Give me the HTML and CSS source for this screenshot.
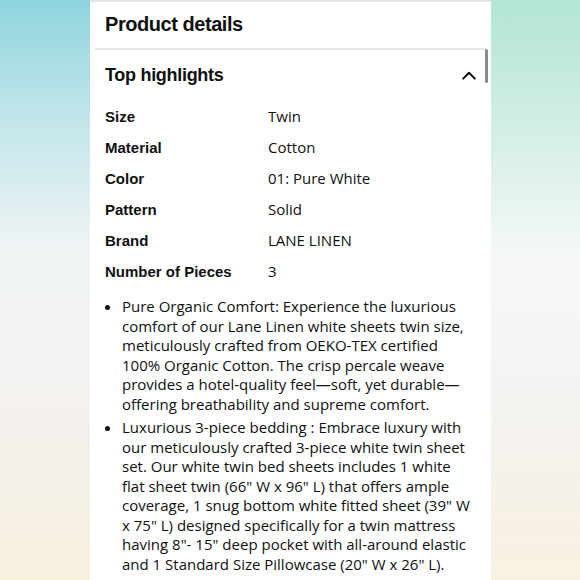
FILE: index.html
```html
<!DOCTYPE html>
<html lang="en">
<head>
<meta charset="utf-8">
<title>Product details</title>
<link rel="stylesheet" href="styles.css">
</head>
<body>
<div class="page">
  <div class="side side-left"></div>
  <main class="panel">
    <h1 class="panel-title">Product details</h1>
    <div class="divider-wrap">
      <div class="divider"></div>
      <div class="scrollbar"></div>
    </div>
    <section class="section">
      <div class="section-head">
        <h2 class="section-title">Top highlights</h2>
        <svg class="chevron" width="14" height="9" viewBox="0 0 14 9" aria-hidden="true">
          <path d="M1.2 7.6 L7 1.8 L12.8 7.6" fill="none" stroke="#0f1111" stroke-width="2" stroke-linecap="round" stroke-linejoin="round"/>
        </svg>
      </div>
      <table class="specs">
        <tr><th>Size</th><td>Twin</td></tr>
        <tr><th>Material</th><td>Cotton</td></tr>
        <tr><th>Color</th><td>01: Pure White</td></tr>
        <tr><th>Pattern</th><td>Solid</td></tr>
        <tr><th>Brand</th><td>LANE LINEN</td></tr>
        <tr><th>Number of Pieces</th><td>3</td></tr>
      </table>
      <ul class="bullets">
        <li>Pure Organic Comfort: Experience the luxurious comfort of our Lane Linen white sheets twin size, meticulously crafted from OEKO-TEX certified 100% Organic Cotton. The crisp percale weave provides a hotel-quality feel—soft, yet durable—offering breathability and supreme comfort.</li>
        <li>Luxurious 3-piece bedding : Embrace luxury with our meticulously crafted 3-piece white twin sheet set. Our white twin bed sheets includes 1 white flat sheet twin (66" W x 96" L) that offers ample coverage, 1 snug bottom white fitted sheet (39" W x 75" L) designed specifically for a twin mattress having 8"- 15" deep pocket with all-around elastic and 1 Standard Size Pillowcase (20" W x 26" L).</li>
      </ul>
    </section>
  </main>
  <div class="side side-right"></div>
</div>
</body>
</html>
```

FILE: styles.css
```css
* { box-sizing: border-box; }

html, body {
  margin: 0;
  padding: 0;
  width: 580px;
  height: 580px;
  overflow: hidden;
}

body {
  font-family: "Open Sans", "Noto Sans", sans-serif;
  color: #0f1111;
  background: #ffffff;
}

.page {
  display: flex;
  width: 580px;
  height: 580px;
}

.side {
  flex: none;
  height: 100%;
}

.side-left {
  width: 90px;
  background: linear-gradient(180deg, #8fd4de 0%, #c0e5ea 20%, #eef3f4 42%, #f4f3f3 60%, #f3efe8 80%, #f8f0dd 100%);
}

.side-right {
  width: 89px;
  background: linear-gradient(180deg, #b2e5d6 0%, #d3eee5 22%, #f6f8f7 45%, #f4f4f4 62%, #f5f1ea 82%, #f9f1e0 100%);
}

.panel {
  flex: none;
  width: 401px;
  height: 100%;
  background: #ffffff;
  border-top: 2px solid #e3e5e5;
  overflow: hidden;
}

.panel-title {
  margin: 0;
  padding: 0 15px;
  height: 46px;
  line-height: 44px;
  font-family: "Liberation Sans", Arial, sans-serif;
  font-size: 20px;
  font-weight: 700;
  letter-spacing: -0.45px;
}

.divider-wrap {
  position: relative;
  padding: 0 5px;
}

.divider {
  height: 2px;
  background: #e7e7e7;
}

.scrollbar {
  position: absolute;
  right: 3px;
  top: 1px;
  width: 3px;
  height: 34px;
  border-radius: 2px;
  background: #8a8a8a;
}

.section {
  padding: 0 15px;
}

.section-head {
  display: flex;
  align-items: center;
  justify-content: space-between;
  height: 51px;
}

.section-title {
  margin: 0;
  font-family: "Liberation Sans", Arial, sans-serif;
  font-size: 18px;
  font-weight: 700;
  letter-spacing: -0.3px;
}

.chevron {
  display: block;
  margin-right: 0;
}

.specs {
  border-collapse: collapse;
  font-size: 15px;
}

.specs th,
.specs td {
  padding: 0;
  height: 31px;
  line-height: 31px;
  text-align: left;
  vertical-align: middle;
}

.specs th {
  width: 163px;
  font-family: "Liberation Sans", Arial, sans-serif;
  font-weight: 700;
}

.specs td {
  font-weight: 400;
}

.bullets {
  margin: 10px 0 0;
  padding: 0 0 0 17px;
  font-size: 15px;
  line-height: 19.5px;
}

.bullets li {
  margin-bottom: 4px;
}
```
